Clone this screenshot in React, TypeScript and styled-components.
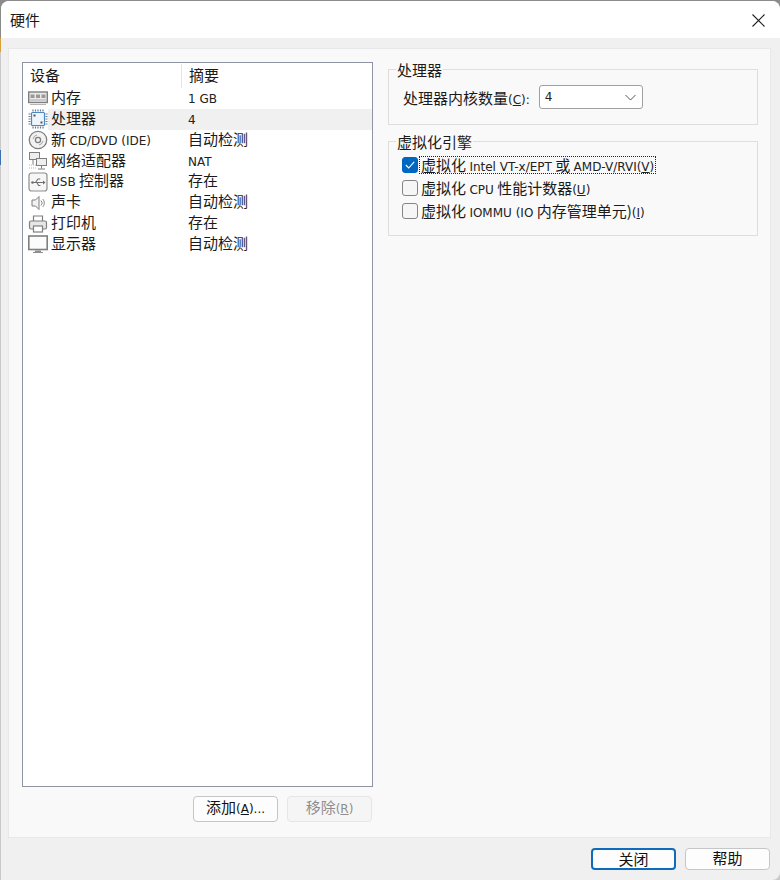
import React from "react";
import styled, { createGlobalStyle } from "styled-components";

const Global = createGlobalStyle`
  html, body { margin: 0; padding: 0; background: #5f5f5f; }
  * { box-sizing: border-box; }
`;

const CJK = `"Noto Sans CJK SC", "Noto Sans", sans-serif`;

const Desktop = styled.div`
  width: 780px;
  height: 880px;
  overflow: hidden;
  background: linear-gradient(#8b8b8b 0 38px, #d9a13a 38px 52px, #c9c9c9 52px 150px, #3d6fb0 150px 165px, #c9c9c9 165px);
`;
const Win = styled.div`
  width: 779px;
  height: 879px;
  margin: 1px 0 0 1px;
  background: #f0f0f0;
  border-radius: 8px 8px 8px 0;
  display: flex;
  flex-direction: column;
  overflow: hidden;
  font-family: ${CJK};
  font-size: 15px;
  color: #1a1a1a;
`;
const TitleBar = styled.div`
  height: 37px;
  background: #fff;
  display: flex;
  align-items: center;
  justify-content: space-between;
  padding: 0 15px 0 9px;
  flex: none;
  line-height: 36px;
`;
const CloseIcon = styled.svg`
  width: 13px;
  height: 13px;
  display: block;
  margin-top: 1px;
`;
const Panel = styled.div`
  margin: 10px 9px 0 7px;
  height: 790px;
  background: #f9f9f9;
  border: 1px solid #e8e8e8;
  padding: 13px 12px 14px 13px;
  display: flex;
  gap: 15px;
  flex: none;
`;
const LeftCol = styled.div`
  width: 351px;
  display: flex;
  flex-direction: column;
  flex: none;
`;
const ListBox = styled.div`
  height: 725px;
  background: #fff;
  border: 1px solid #8f94a3;
  flex: none;
`;
const ListHead = styled.div`
  display: grid;
  grid-template-columns: 158px 1fr;
  height: 25px;
  padding-top: 1px;
`;
const HeadCell = styled.div<{ $divider?: boolean }>`
  line-height: 22px;
  padding-left: 7px;
  border-left: ${(p) => (p.$divider ? "1px solid #e4e4e4" : "0")};
`;
const Rows = styled.div`
  display: grid;
  grid-auto-rows: 20.86px;
`;
const Row = styled.div`
  display: grid;
  grid-template-columns: 25px 133px 1fr;
  align-items: center;
  padding-left: 3px;
`;
const IconSlot = styled.div`
  width: 22px;
  height: 20px;
  display: flex;
  align-items: center;
  justify-content: center;
  margin-left: 1px;
`;
const NameCell = styled.div<{ $selected?: boolean }>`
  height: 100%;
  line-height: 18px;
  white-space: nowrap;
  padding-left: 3px;
  margin-left: -3px;
  background: ${(p) => (p.$selected ? "#f0f0f0" : "transparent")};
`;
const ValueCell = styled(NameCell)`
  padding-left: 4px;
  margin-left: 0;
  margin-right: 0;
`;
const Latin = styled.span`
  font-family: "DejaVu Sans", "Noto Sans", sans-serif;
  font-size: 12px;
  color: #222;
`;
const Key = styled.span`
  text-decoration: underline;
  text-underline-offset: 1px;
`;
const ListActions = styled.div`
  display: flex;
  justify-content: flex-end;
  gap: 9px;
  margin-top: 9px;
  padding-right: 1px;
`;
const Button = styled.button<{ $primary?: boolean; $disabled?: boolean; $h?: number }>`
  width: 85px;
  height: ${(p) => p.$h ?? 26}px;
  padding: 0 0 2px;
  border-radius: 4px;
  font-family: ${CJK};
  font-size: 15px;
  line-height: 18px;
  background: ${(p) => (p.$disabled ? "#f5f5f5" : "#fdfdfd")};
  color: ${(p) => (p.$disabled ? "#8e8e8e" : "#111")};
  border: ${(p) =>
    p.$primary ? "2px solid #0f6cbd" : p.$disabled ? "1px solid #e6e6e6" : "1px solid #c6c6c6"};
  ${Latin} { color: inherit; }
`;
const RightCol = styled.div`
  flex: 1;
  display: flex;
  flex-direction: column;
  gap: 9px;
`;
const Group = styled.fieldset<{ $h: number }>`
  margin: 0;
  min-width: 0;
  height: ${(p) => p.$h}px;
  border: 1px solid #dedede;
  padding: 8px 13px 0;
`;
const GroupTitle = styled.legend`
  padding: 0 1px;
  margin-left: -6px;
  font-size: 15px;
  line-height: 15px;
`;
const ComboRow = styled.div`
  display: flex;
  align-items: center;
  padding-left: 1px;
  gap: 9px;
`;
const Combo = styled.div`
  width: 104px;
  height: 24px;
  background: #fff;
  border: 1px solid #a0a0a0;
  border-radius: 3px;
  display: flex;
  align-items: center;
  justify-content: space-between;
  padding: 0 6px 0 5px;
`;
const Chevron = styled.svg`
  width: 11px;
  height: 7px;
  display: block;
`;
const Checks = styled.div`
  display: flex;
  flex-direction: column;
  gap: 7px;
`;
const CheckRow = styled.div`
  display: flex;
  align-items: center;
  height: 16px;
  gap: 2px;
`;
const Box = styled.div<{ $checked?: boolean }>`
  width: 16px;
  height: 16px;
  flex: none;
  border-radius: 3px;
  background: ${(p) => (p.$checked ? "#0067c0" : "#f6f6f6")};
  border: 1px solid ${(p) => (p.$checked ? "#0067c0" : "#858585")};
  display: flex;
  align-items: center;
  justify-content: center;
`;
const CheckLabel = styled.div<{ $focused?: boolean }>`
  height: 16px;
  line-height: 16px;
  padding: 0 1px 0 1px;
  white-space: nowrap;
  outline: ${(p) => (p.$focused ? "1px dotted #222" : "none")};
`;
const Footer = styled.div`
  flex: 1;
  display: flex;
  justify-content: flex-end;
  align-items: flex-start;
  gap: 9px;
  padding: 10px 10px 0 0;
`;

const stroke = "#7f7f7f";

const Memory = () => (
  <svg width="20" height="15" viewBox="0 0 20 15">
    <rect x=".7" y="1" width="18.600" height="10.500" fill="#e9e9e9" stroke={stroke} strokeWidth="1.400" />
    <rect x="2.500" y="3.500" width="4" height="3.500" fill="#999" />
    <rect x="8" y="3.500" width="4" height="3.500" fill="#999" />
    <rect x="13.500" y="3.500" width="4" height="3.500" fill="#999" />
    <path d="M2 9h16" stroke="#aaa" strokeWidth="1" />
    <path d="M2 13.500h16" stroke="#b5b5b5" strokeWidth="1" />
  </svg>
);
const Cpu = () => (
  <svg width="20" height="20" viewBox="0 0 20 20">
    <rect x="3.500" y="3.500" width="13" height="13" rx="1" fill="#eef5fc" stroke="#4f86bd" strokeWidth="1.200" />
    <path d="M5 .5v2M7.500 .5v2M10 .5v2M12.500 .5v2M15 .5v2M5 17.500v2M7.500 17.500v2M10 17.500v2M12.500 17.500v2M15 17.500v2M.5 5h2M.5 7.500h2M.5 10h2M.5 12.500h2M.5 15h2M17.500 5h2M17.500 7.500h2M17.500 10h2M17.500 12.500h2M17.500 15h2" stroke="#5e7a96" strokeWidth="1.200" />
    <rect x="5.500" y="5.500" width="2" height="2" fill="#4a5563" />
    <rect x="12.500" y="12.500" width="2" height="2" fill="#4a5563" />
  </svg>
);
const Disc = () => (
  <svg width="20" height="20" viewBox="0 0 20 20" fill="none">
    <circle cx="10" cy="10" r="8.700" fill="#f2f2f2" stroke={stroke} strokeWidth="1.300" />
    <circle cx="10" cy="10" r="2.600" stroke={stroke} strokeWidth="1.300" />
    <path d="M5 9a5 5 0 0 1 4-4M15 11a5 5 0 0 1-4 4" stroke="#a5a5a5" strokeWidth="1" />
  </svg>
);
const Network = () => (
  <svg width="20" height="20" viewBox="0 0 20 20" fill="none">
    <rect x="1.500" y="1.500" width="10" height="7" fill="#eee" stroke={stroke} />
    <rect x="8.500" y="7.500" width="10" height="7" fill="#eee" stroke={stroke} />
    <path d="M13.500 14.500v3M10 18h7M5 8.500v5" stroke={stroke} />
    <path d="M1 14h8M1 17h8" stroke="#b0b0b0" strokeDasharray="1 1" />
  </svg>
);
const Usb = () => (
  <svg width="20" height="20" viewBox="0 0 20 20" fill="none">
    <rect x="1" y="1" width="18" height="18" rx="2.500" fill="#f6f6f6" stroke="#8d8d8d" strokeWidth="1.200" />
    <path d="M4.500 10.500H15M7.500 10.500l2.500-3.500h2.200M8.800 10.500l1.800 3h1.800" stroke="#6e6e6e" strokeWidth="1.100" />
    <path d="M15 8.500l2.500 2-2.500 2z" fill="#6e6e6e" />
    <circle cx="4.500" cy="10.500" r="1.300" fill="#6e6e6e" />
  </svg>
);
const Speaker = () => (
  <svg width="20" height="18" viewBox="0 0 20 18" fill="none">
    <path d="M4 6H7.500L11 2.500v13L7.500 12H4z" fill="#f2f2f2" stroke={stroke} />
    <path d="M13 6.500a3.500 3.500 0 0 1 0 5M14.800 5a6 6 0 0 1 0 8" stroke="#8d8d8d" />
  </svg>
);
const Printer = () => (
  <svg width="20" height="20" viewBox="0 0 20 20" fill="none">
    <path d="M5.500 7V2h9v5" stroke={stroke} strokeWidth="1.200" fill="#fff" />
    <rect x="1.500" y="7" width="17" height="8" rx="1.500" fill="#e6e6e6" stroke={stroke} strokeWidth="1.200" />
    <rect x="5.500" y="12" width="9" height="6" fill="#fff" stroke={stroke} strokeWidth="1.200" />
  </svg>
);
const Display = () => (
  <svg width="20" height="20" viewBox="0 0 20 20" fill="none">
    <rect x=".8" y="2" width="18.400" height="13.500" fill="#fbfbfb" stroke={stroke} strokeWidth="1.600" />
    <path d="M7 16.500h6v1.500H7z" fill="#8d8d8d" />
    <path d="M5 18.500h10" stroke="#8d8d8d" strokeWidth="1.200" />
  </svg>
);

const devices: { icon: React.ReactNode; name: React.ReactNode; value: React.ReactNode; selected?: boolean }[] = [
  { icon: <Memory />, name: "内存", value: <Latin>1 GB</Latin> },
  { icon: <Cpu />, name: "处理器", value: <Latin>4</Latin>, selected: true },
  { icon: <Disc />, name: <>新 <Latin>CD/DVD (IDE)</Latin></>, value: "自动检测" },
  { icon: <Network />, name: "网络适配器", value: <Latin>NAT</Latin> },
  { icon: <Usb />, name: <><Latin>USB</Latin> 控制器</>, value: "存在" },
  { icon: <Speaker />, name: "声卡", value: "自动检测" },
  { icon: <Printer />, name: "打印机", value: "存在" },
  { icon: <Display />, name: "显示器", value: "自动检测" },
];

export default function App() {
  return (
    <Desktop>
      <Global />
      <Win>
        <TitleBar>
          <span>硬件</span>
          <CloseIcon viewBox="0 0 13 13">
            <path d="M.5.5l12 12M12.500.5l-12 12" stroke="#222" strokeWidth="1.100" fill="none" />
          </CloseIcon>
        </TitleBar>
        <Panel>
          <LeftCol>
            <ListBox>
              <ListHead>
                <HeadCell>设备</HeadCell>
                <HeadCell $divider>摘要</HeadCell>
              </ListHead>
              <Rows>
                {devices.map((d, i) => (
                  <Row key={i}>
                    <IconSlot>{d.icon}</IconSlot>
                    <NameCell $selected={d.selected}>{d.name}</NameCell>
                    <ValueCell $selected={d.selected}>{d.value}</ValueCell>
                  </Row>
                ))}
              </Rows>
            </ListBox>
            <ListActions>
              <Button>添加<Latin>(<Key>A</Key>)...</Latin></Button>
              <Button $disabled>移除<Latin>(<Key>R</Key>)</Latin></Button>
            </ListActions>
          </LeftCol>
          <RightCol>
            <Group $h={63}>
              <GroupTitle>处理器</GroupTitle>
              <ComboRow>
                <span>处理器内核数量<Latin>(<Key>C</Key>):</Latin></span>
                <Combo>
                  <Latin>4</Latin>
                  <Chevron viewBox="0 0 11 7">
                    <path d="M.5 1l5 5 5-5" stroke="#555" fill="none" />
                  </Chevron>
                </Combo>
              </ComboRow>
            </Group>
            <Group $h={102}>
              <GroupTitle>虚拟化引擎</GroupTitle>
              <Checks>
                <CheckRow>
                  <Box $checked>
                    <svg width="10" height="8" viewBox="0 0 10 8">
                      <path d="M.8 4l2.900 3L9.200.8" stroke="#fff" strokeWidth="1.100" fill="none" />
                    </svg>
                  </Box>
                  <CheckLabel $focused>虚拟化 <Latin>Intel VT-x/EPT</Latin> 或 <Latin>AMD-V/RVI(<Key>V</Key>)</Latin></CheckLabel>
                </CheckRow>
                <CheckRow>
                  <Box />
                  <CheckLabel>虚拟化 <Latin>CPU</Latin> 性能计数器<Latin>(<Key>U</Key>)</Latin></CheckLabel>
                </CheckRow>
                <CheckRow>
                  <Box />
                  <CheckLabel>虚拟化 <Latin>IOMMU (IO</Latin> 内存管理单元)<Latin>(<Key>I</Key>)</Latin></CheckLabel>
                </CheckRow>
              </Checks>
            </Group>
          </RightCol>
        </Panel>
        <Footer>
          <Button $primary $h={22}>关闭</Button>
          <Button $h={22}>帮助</Button>
        </Footer>
      </Win>
    </Desktop>
  );
}
